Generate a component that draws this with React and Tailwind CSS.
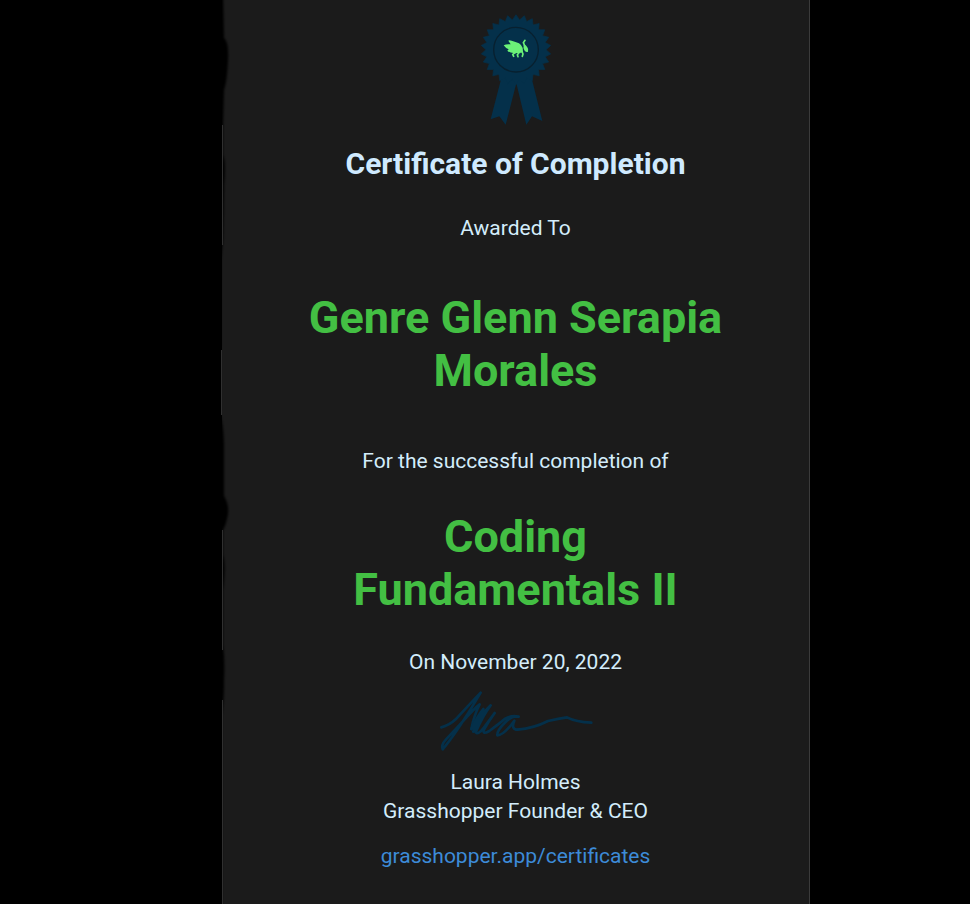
const TEETH = 26;
const rosette = Array.from({ length: TEETH * 2 }, (_, i) => {
  const radius = i % 2 === 0 ? 105 : 90;
  const angle = (Math.PI * i) / TEETH - Math.PI / 2;
  return `${(138 + radius * Math.cos(angle)).toFixed(1)},${(131 + radius * Math.sin(angle)).toFixed(1)}`;
}).join(" ");

function Badge() {
  return (
    <svg viewBox="30 24 216 336" className="h-28 w-18" role="img" aria-label="Award ribbon">
      <path
        d="M97 205 L62 340 L88 331 L107 356 L139 232 L169 356 L186 331 L217 345 L182 205 Z"
        fill="#04304a"
      />
      <polygon points={rosette} fill="#04304a" stroke="#04304a" strokeWidth="2" strokeLinejoin="round" />
      <circle cx="138" cy="131" r="67" fill="none" stroke="#08202f" strokeWidth="4" />
      <g fill="#6bf178">
        <path d="M101 118 Q110 113 122 115 L115 104 Q117 101 125 104 Q137 107 147 112 Q155 117 158 126 L159 138 Q152 142 143 141 L134 142 Q118 141 112 134 L116 130 Q106 126 101 118 Z" />
        <path d="M161 117 Q167 114 172 124 Q177 131 174 137 Q167 140 163 133 Q159 126 161 117 Z" />
      </g>
      <g fill="none" stroke="#6bf178" strokeWidth="5" strokeLinecap="round" strokeLinejoin="round">
        <path d="M164 119 L160 110 L165 103" />
        <path d="M136 140 L128 145 L131 151" />
        <path d="M147 140 L142 146 L144 152" />
        <path d="M156 137 L159 144 L157 151" />
      </g>
    </svg>
  );
}

function Signature() {
  return (
    <svg viewBox="24 12 468 189" className="h-[63px] w-[156px]" role="img" aria-label="Signature of Laura Holmes">
      <g fill="none" stroke="#04304a" strokeWidth="8" strokeLinecap="round" strokeLinejoin="round">
        <path d="M34 127 Q58 121 77 103 Q115 62 152 23 Q120 78 85 130 Q57 171 38 193 Q32 181 48 163 Q78 132 106 101 Q133 70 149 58 Q132 91 124 132" />
        <path d="M124 132 Q140 95 160 72 Q142 100 130 140 Q146 95 182 61 Q158 94 137 142 Q145 150 160 130 L194 84 Q178 106 162 134 Q156 150 178 138 Q193 127 211 113 Q235 88 266 95 Q246 90 224 114 Q200 138 202 151 Q222 150 253 107 Q242 134 263 134" />
        <path d="M263 134 Q311 130 354 108 Q386 101 411 97 Q438 111 484 113" />
      </g>
    </svg>
  );
}

function RaggedEdge() {
  return (
    <svg
      viewBox="0 0 12 904"
      preserveAspectRatio="none"
      className="absolute inset-y-0 -left-1 h-full w-3"
      aria-hidden="true"
    >
      <path
        className="blur-[1px]"
        fill="#000"
        d="M-8 -8 H5 L6 38 Q11 42 10 60 Q9 82 6 90 L5 125 L5 155 Q8 162 6 185 L5 240 L3 260 L2 415 Q6 425 6 450 L6 496 Q11 504 10 514 Q8 525 5 530 L5 555 Q8 565 5 590 V645 Q7 660 6 680 Q6 700 4 715 V912 H-8 Z"
      />
      <path
        fill="none"
        stroke="#303030"
        d="M4.500 125 V245 M3.500 350 V415 M4.500 530 V650 M4.500 700 V904"
      />
    </svg>
  );
}

export default function App() {
  return (
    <div className="grid min-h-screen grid-cols-[222fr_588fr_160fr] bg-black font-['Roboto',sans-serif]">
      <main className="relative col-start-2 flex flex-col items-center border-r border-[#3b3b3b] bg-[#1b1b1b] pt-3.5 pb-8 text-center text-[21px] leading-[29px] text-[#d3edfb]">
        <RaggedEdge />
        <Badge />
        <h1 className="mt-5 text-[30px] leading-9 font-bold text-[#cfeaff]">Certificate of Completion</h1>
        <p className="mt-8">Awarded To</p>
        <h2 className="mt-12 max-w-[430px] text-[45px] leading-[53px] font-bold text-[#43bf43]">
          Genre Glenn Serapia Morales
        </h2>
        <p className="mt-[50px]">For the successful completion of</p>
        <h2 className="mt-[34px] max-w-[430px] text-[45px] leading-[53px] font-bold text-[#43bf43]">
          Coding Fundamentals II
        </h2>
        <p className="mt-8">On November 20, 2022</p>
        <div className="mt-3">
          <Signature />
        </div>
        <p className="mt-4">Laura Holmes</p>
        <p>Grasshopper Founder &amp; CEO</p>
        <a href="https://grasshopper.app/certificates" className="mt-4 text-[#3d8bd8]">
          grasshopper.app/certificates
        </a>
      </main>
    </div>
  );
}
